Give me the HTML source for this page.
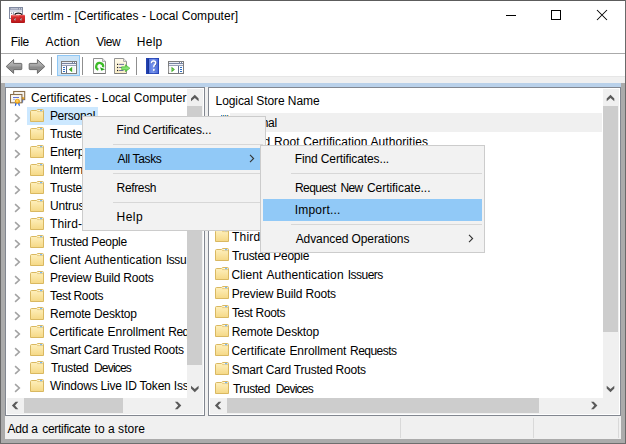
<!DOCTYPE html>
<html><head><meta charset="utf-8"><title>certlm</title>
<style>
html,body{margin:0;padding:0;}
body{width:626px;height:444px;position:relative;overflow:hidden;background:#fff;font-family:"Liberation Sans",sans-serif;font-size:12px;color:#000;}
div,span,svg{position:absolute;box-sizing:border-box;}
.t{white-space:nowrap;letter-spacing:-0.2px;}
.tree .t{left:50.5px;height:18px;line-height:18px;}
.tree .fo{left:30px;}
.tree .ch{left:14px;}
.list .t{left:232.5px;height:19px;line-height:19px;}
.list .fo{left:215px;}
.menu{background:#f2f2f2;border:1px solid #ccc;}
.menu .t{height:22px;line-height:22px;}
.menu .sep{height:1px;background:#d7d7d7;}
.menu .hl{background:#91c9f7;height:22px;}
.sb{background:#f0f0f0;}
.th{background:#cdcdcd;}
</style></head><body>

<div style="left:0;top:0;width:626px;height:444px;background:#ababab;"></div>
<div style="left:1px;top:1px;width:624px;height:82px;background:#fff;"></div>
<div style="left:1px;top:53px;width:624px;height:1px;background:#aaa;"></div>
<div style="left:1px;top:76px;width:624px;height:7px;background:#f0f0f0;"></div>
<div style="left:1px;top:76px;width:624px;height:1px;background:#e6e6e6;"></div>
<div style="left:0;top:0;width:626px;height:1px;background:#5c5c5c;"></div>
<div style="left:0;top:0;width:1px;height:444px;background:linear-gradient(#5c5c5c 0,#5c5c5c 80px,#686868 120px,#686868 100%);"></div>
<div style="left:625px;top:0;width:1px;height:444px;background:#6a6a6a;"></div>
<div style="left:0;top:443px;width:626px;height:1px;background:#6e6e6e;"></div>
<svg style="left:9px;top:7px" width="17" height="17" viewBox="0 0 17 17">
<defs><linearGradient id="tb" x1="0" y1="0" x2="0" y2="1"><stop offset="0" stop-color="#ee6a68"/><stop offset="0.22" stop-color="#d93030"/><stop offset="0.8" stop-color="#c41c1e"/><stop offset="1" stop-color="#a41416"/></linearGradient></defs>
<rect x="0.5" y="0.5" width="13" height="11" fill="#fff" stroke="#818aa0"/>
<rect x="1" y="1" width="12" height="1.9" fill="#8a93ab"/>
<rect x="1.6" y="1.5" width="7.4" height="0.7" fill="#eef0f6"/>
<rect x="10.1" y="1.4" width="0.9" height="0.9" fill="#fff"/><rect x="12" y="1.4" width="0.9" height="0.9" fill="#fff"/>
<rect x="1" y="3.5" width="12" height="1" fill="#aab1c6"/>
<rect x="4.2" y="5" width="0.9" height="6" fill="#8a93ab"/>
<rect x="2" y="5.8" width="1.2" height="0.9" fill="#444c66"/>
<path d="M5.9 8Q6.2 6.1 9.3 6.1Q12.4 6.1 12.7 8" fill="none" stroke="#161616" stroke-width="1.1"/>
<rect x="2" y="7.7" width="14" height="8.3" rx="0.9" fill="url(#tb)"/>
<rect x="3" y="8.5" width="7" height="0.7" fill="#f6a09c" opacity="0.8"/>
<rect x="5.1" y="11" width="1.6" height="2.4" fill="#cfe4e8" stroke="#8c1a1c" stroke-width="0.4"/>
<rect x="11.1" y="11" width="1.6" height="2.4" fill="#cfe4e8" stroke="#8c1a1c" stroke-width="0.4"/>
</svg>
<span class="t" style="left:30.75px;top:1px;height:30px;line-height:30px;letter-spacing:0.050px">certlm - [Certificates - Local Computer]</span>
<div style="left:506px;top:15px;width:10px;height:1px;background:#000;"></div>
<div style="left:551px;top:10px;width:10px;height:10px;border:1px solid #000;"></div>
<svg style="left:596px;top:9px" width="12" height="12" viewBox="0 0 12 12"><path d="M1 1L11 11M11 1L1 11" stroke="#000" stroke-width="1.05" fill="none"/></svg>
<span class="t" style="left:10.80px;top:32px;height:21px;line-height:21px;letter-spacing:-0.300px">File</span>
<span class="t" style="left:45.60px;top:32px;height:21px;line-height:21px;letter-spacing:0.140px">Action</span>
<span class="t" style="left:96.20px;top:32px;height:21px;line-height:21px;letter-spacing:-0.400px">View</span>
<span class="t" style="left:136.80px;top:32px;height:21px;line-height:21px;letter-spacing:0.267px">Help</span>
<svg style="left:5px;top:58px" width="18" height="17" viewBox="0 0 18 17"><defs><linearGradient id="ag" x1="0" y1="0" x2="0" y2="1"><stop offset="0" stop-color="#c2c2c2"/><stop offset="0.45" stop-color="#a4a4a4"/><stop offset="0.55" stop-color="#8c8c8c"/><stop offset="1" stop-color="#909090"/></linearGradient></defs><path d="M1.2 8.5L8.6 1.6V5.4H16.2Q16.8 5.4 16.8 6V11Q16.8 11.6 16.2 11.6H8.6V15.4Z" fill="url(#ag)" stroke="#6c6c6c" stroke-width="1"/></svg>
<svg style="left:28px;top:58px" width="18" height="17" viewBox="0 0 18 17"><path d="M16.8 8.5L9.4 1.6V5.4H1.8Q1.2 5.4 1.2 6V11Q1.2 11.6 1.8 11.6H9.4V15.4Z" fill="url(#ag)" stroke="#6c6c6c" stroke-width="1"/></svg>
<div style="left:51px;top:57px;width:1px;height:18px;background:#8f8f8f;"></div>
<div style="left:82px;top:57px;width:1px;height:18px;background:#8f8f8f;"></div>
<div style="left:136px;top:57px;width:1px;height:18px;background:#8f8f8f;"></div>
<div style="left:57px;top:55px;width:23px;height:21px;background:#cce4f7;border:1px solid #8fc7f5;"></div>
<svg style="left:61px;top:61px" width="16" height="13" viewBox="0 0 16 13" shape-rendering="crispEdges">
<rect x="0" y="0" width="16" height="13" fill="#7c7c7c"/>
<rect x="1" y="1" width="14" height="11" fill="#fff"/>
<rect x="1" y="1" width="14" height="2" fill="#77839f"/>
<rect x="1" y="1" width="10" height="1" fill="#e9ecf3"/>
<rect x="12" y="1" width="1" height="1" fill="#fff"/><rect x="14" y="1" width="1" height="1" fill="#fff"/>
<rect x="1" y="3" width="14" height="1" fill="#eef0f6"/>
<rect x="1" y="4" width="14" height="1" fill="#98a1b8"/>
<g>
<rect x="5" y="5" width="1" height="7" fill="#5e6c8c"/>
<rect x="2" y="6" width="2" height="1" fill="#2f6fc4"/><rect x="2" y="8" width="2" height="1" fill="#2f6fc4"/><rect x="2" y="10" width="2" height="1" fill="#2f6fc4"/>
<g transform="translate(0,0)"><rect x="12.3" y="5.6" width="1.6" height="5.8" fill="#f1f1f1" shape-rendering="auto"/>
<path d="M11.2 5.8V11.2L7.8 8.5Z" fill="#3aaa22" shape-rendering="auto"/></g>
</g></svg>
<svg style="left:93px;top:58px" width="14" height="16" viewBox="0 0 14 16">
<path d="M0.5 0.5H9.6L12.5 3.4V15.5H0.5Z" fill="#fcfcfc" stroke="#909090"/>
<path d="M0.5 15.5H12.5" stroke="#787878" fill="none"/>
<path d="M9.6 0.5V3.4H12.5" fill="#f0f0f0" stroke="#909090" stroke-width="0.8"/>
<path d="M5.3 11.7A3.5 3.5 0 1 1 10.1 9.2" fill="none" stroke="#3dbb28" stroke-width="2.2"/>
<path d="M7.0 9.2L12.0 11.2L8.4 12.8Z" fill="#22a316"/>
</svg>
<svg style="left:114px;top:58px" width="17" height="16" viewBox="0 0 17 16">
<defs><linearGradient id="pg" x1="0" y1="0" x2="0" y2="1"><stop offset="0" stop-color="#fefaea"/><stop offset="1" stop-color="#fbeec6"/></linearGradient>
<linearGradient id="eg" x1="0" y1="0" x2="0" y2="1"><stop offset="0" stop-color="#3fc02c"/><stop offset="0.5" stop-color="#8fe67c"/><stop offset="1" stop-color="#36b524"/></linearGradient></defs>
<path d="M0.5 0.5H9.6L12.5 3.4V15.5H0.5Z" fill="url(#pg)" stroke="#939393"/>
<path d="M0.5 15.5H12.5" stroke="#7c7c7c" fill="none"/>
<path d="M9.6 0.5V3.4H12.5" fill="#f4f4f4" stroke="#939393" stroke-width="0.8"/>
<rect x="3" y="5.8" width="1.2" height="1.2" fill="#1c1c1c"/><rect x="5.1" y="5.9" width="4.9" height="0.9" fill="#5a5f9a"/>
<rect x="3" y="8.9" width="1.2" height="1.2" fill="#1c1c1c"/><rect x="5.1" y="9" width="3" height="0.9" fill="#5a5f9a"/>
<rect x="3" y="11.9" width="1.2" height="1.2" fill="#1c1c1c"/><rect x="5.1" y="12" width="4.4" height="0.9" fill="#5a5f9a"/>
<path d="M7.6 8.8H11.4V6.7L16 10.2L11.4 13.7V11.7H7.6Z" fill="url(#eg)" stroke="#37b026" stroke-width="0.5"/>
</svg>
<svg style="left:146px;top:58px" width="13" height="16" viewBox="0 0 13 16">
<defs><linearGradient id="hg" x1="0" y1="0" x2="1" y2="0"><stop offset="0" stop-color="#5577e0"/><stop offset="0.5" stop-color="#7d99ef"/><stop offset="1" stop-color="#4465d6"/></linearGradient>
<linearGradient id="hs" x1="0" y1="0" x2="1" y2="0"><stop offset="0" stop-color="#2446b8"/><stop offset="1" stop-color="#16308e"/></linearGradient></defs>
<rect x="0" y="0" width="13" height="16" fill="#2240b0"/>
<rect x="3" y="0.8" width="9.2" height="14.4" fill="url(#hg)"/>
<rect x="0.4" y="0.6" width="2.6" height="14.8" fill="url(#hs)"/>
<path d="M6.1 5.6Q6 3.4 8.2 3.4Q10.3 3.4 10.3 5.2Q10.3 6.4 9.2 7.3Q8.4 8 8.4 9.8" fill="none" stroke="#24367a" stroke-width="1.5" opacity="0.55"/>
<rect x="7.6" y="11.7" width="1.7" height="1.7" fill="#24367a" opacity="0.55"/>
<path d="M5.5 5.2Q5.4 2.9 7.6 2.9Q9.7 2.9 9.7 4.7Q9.7 5.9 8.6 6.8Q7.8 7.5 7.8 9.3" fill="none" stroke="#fff" stroke-width="1.5"/>
<rect x="7" y="11.1" width="1.7" height="1.7" fill="#fff"/>
</svg>
<svg style="left:168px;top:61px" width="16" height="13" viewBox="0 0 16 13" shape-rendering="crispEdges">
<rect x="0" y="0" width="16" height="13" fill="#7c7c7c"/>
<rect x="1" y="1" width="14" height="11" fill="#fff"/>
<rect x="1" y="1" width="14" height="2" fill="#77839f"/>
<rect x="1" y="1" width="10" height="1" fill="#e9ecf3"/>
<rect x="12" y="1" width="1" height="1" fill="#fff"/><rect x="14" y="1" width="1" height="1" fill="#fff"/>
<rect x="1" y="3" width="14" height="1" fill="#eef0f6"/>
<rect x="1" y="4" width="14" height="1" fill="#98a1b8"/>
<g transform="translate(16,0) scale(-1,1)">
<rect x="5" y="5" width="1" height="7" fill="#5e6c8c"/>
<rect x="2" y="6" width="2" height="1" fill="#2f6fc4"/><rect x="2" y="8" width="2" height="1" fill="#2f6fc4"/><rect x="2" y="10" width="2" height="1" fill="#2f6fc4"/>
<g transform="translate(1.3,0)"><rect x="12.3" y="5.6" width="1.6" height="5.8" fill="#f1f1f1" shape-rendering="auto"/>
<path d="M11.2 5.8V11.2L7.8 8.5Z" fill="#3aaa22" shape-rendering="auto"/><path d="M10.4 7.4V9.6L9 8.5Z" fill="#8fdc7c" shape-rendering="auto"/></g>
</g></svg>
<div style="left:5px;top:83px;width:616px;height:4px;background:#b9d1ea;"></div>
<div style="left:5px;top:87px;width:616px;height:329px;background:#f0f0f0;"></div>
<div class="tree" style="left:5px;top:87px;width:200px;height:329px;background:#fff;border:1px solid #828790;overflow:hidden;">
<div style="left:-6px;top:-88px;width:626px;height:444px;">
<svg style="left:10px;top:90px" width="16" height="17" viewBox="0 0 16 17">
<defs><linearGradient id="cg" x1="0" y1="0" x2="1" y2="1"><stop offset="0" stop-color="#ffffff"/><stop offset="1" stop-color="#f1ece2"/></linearGradient></defs>
<rect x="3.7" y="1.5" width="11" height="8.1" fill="url(#cg)" stroke="#8a6f4c" stroke-width="1.1"/>
<circle cx="12.8" cy="8.4" r="1.3" fill="#f0a51a"/><path d="M12.2 9.6H13.3L13 13L12.3 12.4Z" fill="#1f5fe0"/>
<rect x="0.5" y="4.5" width="11.4" height="8.3" fill="url(#cg)" stroke="#8a6f4c" stroke-width="1.1"/>
<rect x="3" y="7" width="6" height="0.9" fill="#5566cf"/><rect x="3" y="8.9" width="2.2" height="0.8" fill="#8f9be0"/>
<path d="M5.4 12.6L4.8 16.2L6 15.6L6.9 13Z" fill="#1f5fe0"/><path d="M9.3 12.6L9.9 16.2L8.7 15.6L7.8 13Z" fill="#1f5fe0"/>
<circle cx="7.4" cy="11.2" r="2.5" fill="#eea41a"/><circle cx="7.3" cy="10.9" r="1.3" fill="#ffd35c"/>
</svg>
<span class="t" style="left:31.10px;top:89px;letter-spacing:0.000px">Certificates - Local Computer</span>
<div style="left:27px;top:107px;width:71px;height:18px;background:#cce8ff;"></div>
<svg class="ch" style="top:113px" width="7" height="10" viewBox="0 0 7 10"><path d="M1.1 1.2L5.3 5L1.1 8.8" fill="none" stroke="#a3a3a3" stroke-width="1.6"/></svg>
<svg class="fo" style="top:109px" width="14" height="13" viewBox="0 0 14 13"><defs><linearGradient id="fg" x1="0" y1="0" x2="0" y2="1"><stop offset="0" stop-color="#fff2c2"/><stop offset="1" stop-color="#f5d885"/></linearGradient></defs><path d="M0.5 12.5V2.6Q0.5 1.5 1.6 1.5H6.4L7.6 0.5H12.4Q13.5 0.5 13.5 1.6V12.5Z" fill="url(#fg)" stroke="#d9b861"/><path d="M7.2 2.6H13" stroke="#e6c776" fill="none"/><rect x="8.6" y="1.1" width="4" height="1.1" fill="#fffbe8"/><rect x="10" y="1.1" width="2.2" height="1.1" fill="#6fb2f2"/></svg>
<span class="t" style="left:49.90px;top:107px;letter-spacing:-0.271px">Personal</span>
<svg class="ch" style="top:131px" width="7" height="10" viewBox="0 0 7 10"><path d="M1.1 1.2L5.3 5L1.1 8.8" fill="none" stroke="#a3a3a3" stroke-width="1.6"/></svg>
<svg class="fo" style="top:127px" width="14" height="13" viewBox="0 0 14 13"><defs><linearGradient id="fg" x1="0" y1="0" x2="0" y2="1"><stop offset="0" stop-color="#fff2c2"/><stop offset="1" stop-color="#f5d885"/></linearGradient></defs><path d="M0.5 12.5V2.6Q0.5 1.5 1.6 1.5H6.4L7.6 0.5H12.4Q13.5 0.5 13.5 1.6V12.5Z" fill="url(#fg)" stroke="#d9b861"/><path d="M7.2 2.6H13" stroke="#e6c776" fill="none"/><rect x="8.6" y="1.1" width="4" height="1.1" fill="#fffbe8"/><rect x="10" y="1.1" width="2.2" height="1.1" fill="#6fb2f2"/></svg>
<span class="t" style="left:50.10px;top:125px;letter-spacing:-0.300px">Trusted Root Certification Authorities</span>
<svg class="ch" style="top:149px" width="7" height="10" viewBox="0 0 7 10"><path d="M1.1 1.2L5.3 5L1.1 8.8" fill="none" stroke="#a3a3a3" stroke-width="1.6"/></svg>
<svg class="fo" style="top:145px" width="14" height="13" viewBox="0 0 14 13"><defs><linearGradient id="fg" x1="0" y1="0" x2="0" y2="1"><stop offset="0" stop-color="#fff2c2"/><stop offset="1" stop-color="#f5d885"/></linearGradient></defs><path d="M0.5 12.5V2.6Q0.5 1.5 1.6 1.5H6.4L7.6 0.5H12.4Q13.5 0.5 13.5 1.6V12.5Z" fill="url(#fg)" stroke="#d9b861"/><path d="M7.2 2.6H13" stroke="#e6c776" fill="none"/><rect x="8.6" y="1.1" width="4" height="1.1" fill="#fffbe8"/><rect x="10" y="1.1" width="2.2" height="1.1" fill="#6fb2f2"/></svg>
<span class="t" style="left:49.90px;top:143px;letter-spacing:-0.150px">Enterprise Trust</span>
<svg class="ch" style="top:167px" width="7" height="10" viewBox="0 0 7 10"><path d="M1.1 1.2L5.3 5L1.1 8.8" fill="none" stroke="#a3a3a3" stroke-width="1.6"/></svg>
<svg class="fo" style="top:163px" width="14" height="13" viewBox="0 0 14 13"><defs><linearGradient id="fg" x1="0" y1="0" x2="0" y2="1"><stop offset="0" stop-color="#fff2c2"/><stop offset="1" stop-color="#f5d885"/></linearGradient></defs><path d="M0.5 12.5V2.6Q0.5 1.5 1.6 1.5H6.4L7.6 0.5H12.4Q13.5 0.5 13.5 1.6V12.5Z" fill="url(#fg)" stroke="#d9b861"/><path d="M7.2 2.6H13" stroke="#e6c776" fill="none"/><rect x="8.6" y="1.1" width="4" height="1.1" fill="#fffbe8"/><rect x="10" y="1.1" width="2.2" height="1.1" fill="#6fb2f2"/></svg>
<span class="t" style="left:49.90px;top:161px;letter-spacing:-0.150px">Intermediate Certification Authorities</span>
<svg class="ch" style="top:185px" width="7" height="10" viewBox="0 0 7 10"><path d="M1.1 1.2L5.3 5L1.1 8.8" fill="none" stroke="#a3a3a3" stroke-width="1.6"/></svg>
<svg class="fo" style="top:181px" width="14" height="13" viewBox="0 0 14 13"><defs><linearGradient id="fg" x1="0" y1="0" x2="0" y2="1"><stop offset="0" stop-color="#fff2c2"/><stop offset="1" stop-color="#f5d885"/></linearGradient></defs><path d="M0.5 12.5V2.6Q0.5 1.5 1.6 1.5H6.4L7.6 0.5H12.4Q13.5 0.5 13.5 1.6V12.5Z" fill="url(#fg)" stroke="#d9b861"/><path d="M7.2 2.6H13" stroke="#e6c776" fill="none"/><rect x="8.6" y="1.1" width="4" height="1.1" fill="#fffbe8"/><rect x="10" y="1.1" width="2.2" height="1.1" fill="#6fb2f2"/></svg>
<span class="t" style="left:50.10px;top:179px;letter-spacing:-0.300px">Trusted Publishers</span>
<svg class="ch" style="top:203px" width="7" height="10" viewBox="0 0 7 10"><path d="M1.1 1.2L5.3 5L1.1 8.8" fill="none" stroke="#a3a3a3" stroke-width="1.6"/></svg>
<svg class="fo" style="top:199px" width="14" height="13" viewBox="0 0 14 13"><defs><linearGradient id="fg" x1="0" y1="0" x2="0" y2="1"><stop offset="0" stop-color="#fff2c2"/><stop offset="1" stop-color="#f5d885"/></linearGradient></defs><path d="M0.5 12.5V2.6Q0.5 1.5 1.6 1.5H6.4L7.6 0.5H12.4Q13.5 0.5 13.5 1.6V12.5Z" fill="url(#fg)" stroke="#d9b861"/><path d="M7.2 2.6H13" stroke="#e6c776" fill="none"/><rect x="8.6" y="1.1" width="4" height="1.1" fill="#fffbe8"/><rect x="10" y="1.1" width="2.2" height="1.1" fill="#6fb2f2"/></svg>
<span class="t" style="left:49.90px;top:197px;letter-spacing:-0.150px">Untrusted Certificates</span>
<svg class="ch" style="top:221px" width="7" height="10" viewBox="0 0 7 10"><path d="M1.1 1.2L5.3 5L1.1 8.8" fill="none" stroke="#a3a3a3" stroke-width="1.6"/></svg>
<svg class="fo" style="top:217px" width="14" height="13" viewBox="0 0 14 13"><defs><linearGradient id="fg" x1="0" y1="0" x2="0" y2="1"><stop offset="0" stop-color="#fff2c2"/><stop offset="1" stop-color="#f5d885"/></linearGradient></defs><path d="M0.5 12.5V2.6Q0.5 1.5 1.6 1.5H6.4L7.6 0.5H12.4Q13.5 0.5 13.5 1.6V12.5Z" fill="url(#fg)" stroke="#d9b861"/><path d="M7.2 2.6H13" stroke="#e6c776" fill="none"/><rect x="8.6" y="1.1" width="4" height="1.1" fill="#fffbe8"/><rect x="10" y="1.1" width="2.2" height="1.1" fill="#6fb2f2"/></svg>
<span class="t" style="left:50.10px;top:215px;letter-spacing:0.120px">Third-Party Root Certification Authorities</span>
<svg class="ch" style="top:239px" width="7" height="10" viewBox="0 0 7 10"><path d="M1.1 1.2L5.3 5L1.1 8.8" fill="none" stroke="#a3a3a3" stroke-width="1.6"/></svg>
<svg class="fo" style="top:235px" width="14" height="13" viewBox="0 0 14 13"><defs><linearGradient id="fg" x1="0" y1="0" x2="0" y2="1"><stop offset="0" stop-color="#fff2c2"/><stop offset="1" stop-color="#f5d885"/></linearGradient></defs><path d="M0.5 12.5V2.6Q0.5 1.5 1.6 1.5H6.4L7.6 0.5H12.4Q13.5 0.5 13.5 1.6V12.5Z" fill="url(#fg)" stroke="#d9b861"/><path d="M7.2 2.6H13" stroke="#e6c776" fill="none"/><rect x="8.6" y="1.1" width="4" height="1.1" fill="#fffbe8"/><rect x="10" y="1.1" width="2.2" height="1.1" fill="#6fb2f2"/></svg>
<span class="t" style="left:50.10px;top:233px;letter-spacing:-0.300px">Trusted People</span>
<svg class="ch" style="top:257px" width="7" height="10" viewBox="0 0 7 10"><path d="M1.1 1.2L5.3 5L1.1 8.8" fill="none" stroke="#a3a3a3" stroke-width="1.6"/></svg>
<svg class="fo" style="top:253px" width="14" height="13" viewBox="0 0 14 13"><defs><linearGradient id="fg" x1="0" y1="0" x2="0" y2="1"><stop offset="0" stop-color="#fff2c2"/><stop offset="1" stop-color="#f5d885"/></linearGradient></defs><path d="M0.5 12.5V2.6Q0.5 1.5 1.6 1.5H6.4L7.6 0.5H12.4Q13.5 0.5 13.5 1.6V12.5Z" fill="url(#fg)" stroke="#d9b861"/><path d="M7.2 2.6H13" stroke="#e6c776" fill="none"/><rect x="8.6" y="1.1" width="4" height="1.1" fill="#fffbe8"/><rect x="10" y="1.1" width="2.2" height="1.1" fill="#6fb2f2"/></svg>
<span class="t" style="left:49.60px;top:251px;letter-spacing:0.060px">Client</span><span class="t" style="left:84.60px;top:251px;letter-spacing:0.085px">Authentication</span><span class="t" style="left:165.90px;top:251px;letter-spacing:-0.433px">Issu</span>
<svg class="ch" style="top:275px" width="7" height="10" viewBox="0 0 7 10"><path d="M1.1 1.2L5.3 5L1.1 8.8" fill="none" stroke="#a3a3a3" stroke-width="1.6"/></svg>
<svg class="fo" style="top:271px" width="14" height="13" viewBox="0 0 14 13"><defs><linearGradient id="fg" x1="0" y1="0" x2="0" y2="1"><stop offset="0" stop-color="#fff2c2"/><stop offset="1" stop-color="#f5d885"/></linearGradient></defs><path d="M0.5 12.5V2.6Q0.5 1.5 1.6 1.5H6.4L7.6 0.5H12.4Q13.5 0.5 13.5 1.6V12.5Z" fill="url(#fg)" stroke="#d9b861"/><path d="M7.2 2.6H13" stroke="#e6c776" fill="none"/><rect x="8.6" y="1.1" width="4" height="1.1" fill="#fffbe8"/><rect x="10" y="1.1" width="2.2" height="1.1" fill="#6fb2f2"/></svg>
<span class="t" style="left:49.90px;top:269px;letter-spacing:-0.189px">Preview Build Roots</span>
<svg class="ch" style="top:293px" width="7" height="10" viewBox="0 0 7 10"><path d="M1.1 1.2L5.3 5L1.1 8.8" fill="none" stroke="#a3a3a3" stroke-width="1.6"/></svg>
<svg class="fo" style="top:289px" width="14" height="13" viewBox="0 0 14 13"><defs><linearGradient id="fg" x1="0" y1="0" x2="0" y2="1"><stop offset="0" stop-color="#fff2c2"/><stop offset="1" stop-color="#f5d885"/></linearGradient></defs><path d="M0.5 12.5V2.6Q0.5 1.5 1.6 1.5H6.4L7.6 0.5H12.4Q13.5 0.5 13.5 1.6V12.5Z" fill="url(#fg)" stroke="#d9b861"/><path d="M7.2 2.6H13" stroke="#e6c776" fill="none"/><rect x="8.6" y="1.1" width="4" height="1.1" fill="#fffbe8"/><rect x="10" y="1.1" width="2.2" height="1.1" fill="#6fb2f2"/></svg>
<span class="t" style="left:50.10px;top:287px;letter-spacing:-0.378px">Test Roots</span>
<svg class="ch" style="top:311px" width="7" height="10" viewBox="0 0 7 10"><path d="M1.1 1.2L5.3 5L1.1 8.8" fill="none" stroke="#a3a3a3" stroke-width="1.6"/></svg>
<svg class="fo" style="top:307px" width="14" height="13" viewBox="0 0 14 13"><defs><linearGradient id="fg" x1="0" y1="0" x2="0" y2="1"><stop offset="0" stop-color="#fff2c2"/><stop offset="1" stop-color="#f5d885"/></linearGradient></defs><path d="M0.5 12.5V2.6Q0.5 1.5 1.6 1.5H6.4L7.6 0.5H12.4Q13.5 0.5 13.5 1.6V12.5Z" fill="url(#fg)" stroke="#d9b861"/><path d="M7.2 2.6H13" stroke="#e6c776" fill="none"/><rect x="8.6" y="1.1" width="4" height="1.1" fill="#fffbe8"/><rect x="10" y="1.1" width="2.2" height="1.1" fill="#6fb2f2"/></svg>
<span class="t" style="left:49.90px;top:305px;letter-spacing:-0.177px">Remote Desktop</span>
<svg class="ch" style="top:329px" width="7" height="10" viewBox="0 0 7 10"><path d="M1.1 1.2L5.3 5L1.1 8.8" fill="none" stroke="#a3a3a3" stroke-width="1.6"/></svg>
<svg class="fo" style="top:325px" width="14" height="13" viewBox="0 0 14 13"><defs><linearGradient id="fg" x1="0" y1="0" x2="0" y2="1"><stop offset="0" stop-color="#fff2c2"/><stop offset="1" stop-color="#f5d885"/></linearGradient></defs><path d="M0.5 12.5V2.6Q0.5 1.5 1.6 1.5H6.4L7.6 0.5H12.4Q13.5 0.5 13.5 1.6V12.5Z" fill="url(#fg)" stroke="#d9b861"/><path d="M7.2 2.6H13" stroke="#e6c776" fill="none"/><rect x="8.6" y="1.1" width="4" height="1.1" fill="#fffbe8"/><rect x="10" y="1.1" width="2.2" height="1.1" fill="#6fb2f2"/></svg>
<span class="t" style="left:49.60px;top:323px;letter-spacing:0.020px">Certificate</span><span class="t" style="left:107.60px;top:323px;letter-spacing:-0.044px">Enrollment</span><span class="t" style="left:168.30px;top:323px;letter-spacing:-0.543px">Requests</span>
<svg class="ch" style="top:347px" width="7" height="10" viewBox="0 0 7 10"><path d="M1.1 1.2L5.3 5L1.1 8.8" fill="none" stroke="#a3a3a3" stroke-width="1.6"/></svg>
<svg class="fo" style="top:343px" width="14" height="13" viewBox="0 0 14 13"><defs><linearGradient id="fg" x1="0" y1="0" x2="0" y2="1"><stop offset="0" stop-color="#fff2c2"/><stop offset="1" stop-color="#f5d885"/></linearGradient></defs><path d="M0.5 12.5V2.6Q0.5 1.5 1.6 1.5H6.4L7.6 0.5H12.4Q13.5 0.5 13.5 1.6V12.5Z" fill="url(#fg)" stroke="#d9b861"/><path d="M7.2 2.6H13" stroke="#e6c776" fill="none"/><rect x="8.6" y="1.1" width="4" height="1.1" fill="#fffbe8"/><rect x="10" y="1.1" width="2.2" height="1.1" fill="#6fb2f2"/></svg>
<span class="t" style="left:49.90px;top:341px;letter-spacing:-0.226px">Smart Card Trusted Roots</span>
<svg class="ch" style="top:365px" width="7" height="10" viewBox="0 0 7 10"><path d="M1.1 1.2L5.3 5L1.1 8.8" fill="none" stroke="#a3a3a3" stroke-width="1.6"/></svg>
<svg class="fo" style="top:361px" width="14" height="13" viewBox="0 0 14 13"><defs><linearGradient id="fg" x1="0" y1="0" x2="0" y2="1"><stop offset="0" stop-color="#fff2c2"/><stop offset="1" stop-color="#f5d885"/></linearGradient></defs><path d="M0.5 12.5V2.6Q0.5 1.5 1.6 1.5H6.4L7.6 0.5H12.4Q13.5 0.5 13.5 1.6V12.5Z" fill="url(#fg)" stroke="#d9b861"/><path d="M7.2 2.6H13" stroke="#e6c776" fill="none"/><rect x="8.6" y="1.1" width="4" height="1.1" fill="#fffbe8"/><rect x="10" y="1.1" width="2.2" height="1.1" fill="#6fb2f2"/></svg>
<span class="t" style="left:51.10px;top:359px;letter-spacing:-0.433px">Trusted</span><span class="t" style="left:93.90px;top:359px;letter-spacing:-0.783px">Devices</span>
<svg class="ch" style="top:383px" width="7" height="10" viewBox="0 0 7 10"><path d="M1.1 1.2L5.3 5L1.1 8.8" fill="none" stroke="#a3a3a3" stroke-width="1.6"/></svg>
<svg class="fo" style="top:379px" width="14" height="13" viewBox="0 0 14 13"><defs><linearGradient id="fg" x1="0" y1="0" x2="0" y2="1"><stop offset="0" stop-color="#fff2c2"/><stop offset="1" stop-color="#f5d885"/></linearGradient></defs><path d="M0.5 12.5V2.6Q0.5 1.5 1.6 1.5H6.4L7.6 0.5H12.4Q13.5 0.5 13.5 1.6V12.5Z" fill="url(#fg)" stroke="#d9b861"/><path d="M7.2 2.6H13" stroke="#e6c776" fill="none"/><rect x="8.6" y="1.1" width="4" height="1.1" fill="#fffbe8"/><rect x="10" y="1.1" width="2.2" height="1.1" fill="#6fb2f2"/></svg>
<span class="t" style="left:50.10px;top:377px;letter-spacing:-0.190px">Windows Live ID Token Issuer</span>
<div style="left:203px;top:88px;width:1px;height:327px;background:#fff;"></div>
<div class="sb" style="left:187px;top:89px;width:16px;height:309px;"></div>
<div class="th" style="left:187px;top:106px;width:15px;height:259px;"></div>
<svg style="left:0;top:0" width="626" height="444"><polygon points="194.8,94.8 198.6,98.5 198.6,101.2 194.8,97.9 191.0,101.2 191.0,98.5" fill="#5a5a5a"/></svg>
<svg style="left:0;top:0" width="626" height="444"><polygon points="194.8,392.2 198.6,388.5 198.6,385.8 194.8,389.1 191.0,385.8 191.0,388.5" fill="#5a5a5a"/></svg>
<div class="sb" style="left:7px;top:398px;width:196px;height:16px;"></div>
<div class="th" style="left:24px;top:398px;width:98.5px;height:15px;"></div>
<svg style="left:0;top:0" width="626" height="444"><polygon points="11.9,405.5 15.6,409.3 18.3,409.3 15.0,405.5 18.3,401.7 15.6,401.7" fill="#5a5a5a"/></svg>
<svg style="left:0;top:0" width="626" height="444"><polygon points="181.3,405.5 177.6,409.3 174.9,409.3 178.2,405.5 174.9,401.7 177.6,401.7" fill="#5a5a5a"/></svg>
</div></div>
<div class="list" style="left:208px;top:87px;width:413px;height:329px;background:#fff;border:1px solid #828790;overflow:hidden;">
<div style="left:-209px;top:-88px;width:626px;height:444px;">
<span class="t" style="left:215.60px;top:92px;height:19px;line-height:19px;letter-spacing:-0.082px">Logical Store Name</span>
<div style="left:230px;top:113px;width:372px;height:19px;background:#f0f0f0;"></div>
<div style="left:221px;top:115px;width:8px;height:1px;background:repeating-linear-gradient(90deg,#2a84e2 0,#2a84e2 1px,#f5d788 1px,#f5d788 2px);"></div>
<span class="t" style="left:231.70px;top:114px;letter-spacing:-0.270px">Personal</span>
<svg class="fo" style="top:134px" width="14" height="13" viewBox="0 0 14 13"><defs><linearGradient id="fg" x1="0" y1="0" x2="0" y2="1"><stop offset="0" stop-color="#fff2c2"/><stop offset="1" stop-color="#f5d885"/></linearGradient></defs><path d="M0.5 12.5V2.6Q0.5 1.5 1.6 1.5H6.4L7.6 0.5H12.4Q13.5 0.5 13.5 1.6V12.5Z" fill="url(#fg)" stroke="#d9b861"/><path d="M7.2 2.6H13" stroke="#e6c776" fill="none"/><rect x="8.6" y="1.1" width="4" height="1.1" fill="#fffbe8"/><rect x="10" y="1.1" width="2.2" height="1.1" fill="#6fb2f2"/></svg>
<span class="t" style="left:231.90px;top:133px;letter-spacing:-0.333px">Trusted</span>
<span class="t" style="left:274.10px;top:133px;letter-spacing:0.083px">Root Certification Authorities</span>
<svg class="fo" style="top:153px" width="14" height="13" viewBox="0 0 14 13"><defs><linearGradient id="fg" x1="0" y1="0" x2="0" y2="1"><stop offset="0" stop-color="#fff2c2"/><stop offset="1" stop-color="#f5d885"/></linearGradient></defs><path d="M0.5 12.5V2.6Q0.5 1.5 1.6 1.5H6.4L7.6 0.5H12.4Q13.5 0.5 13.5 1.6V12.5Z" fill="url(#fg)" stroke="#d9b861"/><path d="M7.2 2.6H13" stroke="#e6c776" fill="none"/><rect x="8.6" y="1.1" width="4" height="1.1" fill="#fffbe8"/><rect x="10" y="1.1" width="2.2" height="1.1" fill="#6fb2f2"/></svg>
<span class="t" style="left:231.70px;top:152px;letter-spacing:-0.150px">Enterprise Trust</span>
<svg class="fo" style="top:172px" width="14" height="13" viewBox="0 0 14 13"><defs><linearGradient id="fg" x1="0" y1="0" x2="0" y2="1"><stop offset="0" stop-color="#fff2c2"/><stop offset="1" stop-color="#f5d885"/></linearGradient></defs><path d="M0.5 12.5V2.6Q0.5 1.5 1.6 1.5H6.4L7.6 0.5H12.4Q13.5 0.5 13.5 1.6V12.5Z" fill="url(#fg)" stroke="#d9b861"/><path d="M7.2 2.6H13" stroke="#e6c776" fill="none"/><rect x="8.6" y="1.1" width="4" height="1.1" fill="#fffbe8"/><rect x="10" y="1.1" width="2.2" height="1.1" fill="#6fb2f2"/></svg>
<span class="t" style="left:231.70px;top:171px;letter-spacing:-0.150px">Intermediate Certification Authorities</span>
<svg class="fo" style="top:191px" width="14" height="13" viewBox="0 0 14 13"><defs><linearGradient id="fg" x1="0" y1="0" x2="0" y2="1"><stop offset="0" stop-color="#fff2c2"/><stop offset="1" stop-color="#f5d885"/></linearGradient></defs><path d="M0.5 12.5V2.6Q0.5 1.5 1.6 1.5H6.4L7.6 0.5H12.4Q13.5 0.5 13.5 1.6V12.5Z" fill="url(#fg)" stroke="#d9b861"/><path d="M7.2 2.6H13" stroke="#e6c776" fill="none"/><rect x="8.6" y="1.1" width="4" height="1.1" fill="#fffbe8"/><rect x="10" y="1.1" width="2.2" height="1.1" fill="#6fb2f2"/></svg>
<span class="t" style="left:231.90px;top:190px;letter-spacing:-0.300px">Trusted Publishers</span>
<svg class="fo" style="top:210px" width="14" height="13" viewBox="0 0 14 13"><defs><linearGradient id="fg" x1="0" y1="0" x2="0" y2="1"><stop offset="0" stop-color="#fff2c2"/><stop offset="1" stop-color="#f5d885"/></linearGradient></defs><path d="M0.5 12.5V2.6Q0.5 1.5 1.6 1.5H6.4L7.6 0.5H12.4Q13.5 0.5 13.5 1.6V12.5Z" fill="url(#fg)" stroke="#d9b861"/><path d="M7.2 2.6H13" stroke="#e6c776" fill="none"/><rect x="8.6" y="1.1" width="4" height="1.1" fill="#fffbe8"/><rect x="10" y="1.1" width="2.2" height="1.1" fill="#6fb2f2"/></svg>
<span class="t" style="left:231.70px;top:209px;letter-spacing:-0.150px">Untrusted Certificates</span>
<svg class="fo" style="top:229px" width="14" height="13" viewBox="0 0 14 13"><defs><linearGradient id="fg" x1="0" y1="0" x2="0" y2="1"><stop offset="0" stop-color="#fff2c2"/><stop offset="1" stop-color="#f5d885"/></linearGradient></defs><path d="M0.5 12.5V2.6Q0.5 1.5 1.6 1.5H6.4L7.6 0.5H12.4Q13.5 0.5 13.5 1.6V12.5Z" fill="url(#fg)" stroke="#d9b861"/><path d="M7.2 2.6H13" stroke="#e6c776" fill="none"/><rect x="8.6" y="1.1" width="4" height="1.1" fill="#fffbe8"/><rect x="10" y="1.1" width="2.2" height="1.1" fill="#6fb2f2"/></svg>
<span class="t" style="left:231.90px;top:228px;letter-spacing:0.250px">Third-Party Root Certification Authorities</span>
<svg class="fo" style="top:248px" width="14" height="13" viewBox="0 0 14 13"><defs><linearGradient id="fg" x1="0" y1="0" x2="0" y2="1"><stop offset="0" stop-color="#fff2c2"/><stop offset="1" stop-color="#f5d885"/></linearGradient></defs><path d="M0.5 12.5V2.6Q0.5 1.5 1.6 1.5H6.4L7.6 0.5H12.4Q13.5 0.5 13.5 1.6V12.5Z" fill="url(#fg)" stroke="#d9b861"/><path d="M7.2 2.6H13" stroke="#e6c776" fill="none"/><rect x="8.6" y="1.1" width="4" height="1.1" fill="#fffbe8"/><rect x="10" y="1.1" width="2.2" height="1.1" fill="#6fb2f2"/></svg>
<span class="t" style="left:231.90px;top:247px;letter-spacing:-0.269px">Trusted People</span>
<svg class="fo" style="top:267px" width="14" height="13" viewBox="0 0 14 13"><defs><linearGradient id="fg" x1="0" y1="0" x2="0" y2="1"><stop offset="0" stop-color="#fff2c2"/><stop offset="1" stop-color="#f5d885"/></linearGradient></defs><path d="M0.5 12.5V2.6Q0.5 1.5 1.6 1.5H6.4L7.6 0.5H12.4Q13.5 0.5 13.5 1.6V12.5Z" fill="url(#fg)" stroke="#d9b861"/><path d="M7.2 2.6H13" stroke="#e6c776" fill="none"/><rect x="8.6" y="1.1" width="4" height="1.1" fill="#fffbe8"/><rect x="10" y="1.1" width="2.2" height="1.1" fill="#6fb2f2"/></svg>
<span class="t" style="left:231.40px;top:266px;letter-spacing:0.060px">Client</span><span class="t" style="left:266.40px;top:266px;letter-spacing:0.085px">Authentication</span><span class="t" style="left:347.70px;top:266px;letter-spacing:-0.500px">Issuers</span>
<svg class="fo" style="top:286px" width="14" height="13" viewBox="0 0 14 13"><defs><linearGradient id="fg" x1="0" y1="0" x2="0" y2="1"><stop offset="0" stop-color="#fff2c2"/><stop offset="1" stop-color="#f5d885"/></linearGradient></defs><path d="M0.5 12.5V2.6Q0.5 1.5 1.6 1.5H6.4L7.6 0.5H12.4Q13.5 0.5 13.5 1.6V12.5Z" fill="url(#fg)" stroke="#d9b861"/><path d="M7.2 2.6H13" stroke="#e6c776" fill="none"/><rect x="8.6" y="1.1" width="4" height="1.1" fill="#fffbe8"/><rect x="10" y="1.1" width="2.2" height="1.1" fill="#6fb2f2"/></svg>
<span class="t" style="left:231.70px;top:285px;letter-spacing:-0.167px">Preview Build Roots</span>
<svg class="fo" style="top:305px" width="14" height="13" viewBox="0 0 14 13"><defs><linearGradient id="fg" x1="0" y1="0" x2="0" y2="1"><stop offset="0" stop-color="#fff2c2"/><stop offset="1" stop-color="#f5d885"/></linearGradient></defs><path d="M0.5 12.5V2.6Q0.5 1.5 1.6 1.5H6.4L7.6 0.5H12.4Q13.5 0.5 13.5 1.6V12.5Z" fill="url(#fg)" stroke="#d9b861"/><path d="M7.2 2.6H13" stroke="#e6c776" fill="none"/><rect x="8.6" y="1.1" width="4" height="1.1" fill="#fffbe8"/><rect x="10" y="1.1" width="2.2" height="1.1" fill="#6fb2f2"/></svg>
<span class="t" style="left:231.90px;top:304px;letter-spacing:-0.333px">Test Roots</span>
<svg class="fo" style="top:324px" width="14" height="13" viewBox="0 0 14 13"><defs><linearGradient id="fg" x1="0" y1="0" x2="0" y2="1"><stop offset="0" stop-color="#fff2c2"/><stop offset="1" stop-color="#f5d885"/></linearGradient></defs><path d="M0.5 12.5V2.6Q0.5 1.5 1.6 1.5H6.4L7.6 0.5H12.4Q13.5 0.5 13.5 1.6V12.5Z" fill="url(#fg)" stroke="#d9b861"/><path d="M7.2 2.6H13" stroke="#e6c776" fill="none"/><rect x="8.6" y="1.1" width="4" height="1.1" fill="#fffbe8"/><rect x="10" y="1.1" width="2.2" height="1.1" fill="#6fb2f2"/></svg>
<span class="t" style="left:231.70px;top:323px;letter-spacing:-0.138px">Remote Desktop</span>
<svg class="fo" style="top:343px" width="14" height="13" viewBox="0 0 14 13"><defs><linearGradient id="fg" x1="0" y1="0" x2="0" y2="1"><stop offset="0" stop-color="#fff2c2"/><stop offset="1" stop-color="#f5d885"/></linearGradient></defs><path d="M0.5 12.5V2.6Q0.5 1.5 1.6 1.5H6.4L7.6 0.5H12.4Q13.5 0.5 13.5 1.6V12.5Z" fill="url(#fg)" stroke="#d9b861"/><path d="M7.2 2.6H13" stroke="#e6c776" fill="none"/><rect x="8.6" y="1.1" width="4" height="1.1" fill="#fffbe8"/><rect x="10" y="1.1" width="2.2" height="1.1" fill="#6fb2f2"/></svg>
<span class="t" style="left:231.40px;top:342px;letter-spacing:0.020px">Certificate</span><span class="t" style="left:289.40px;top:342px;letter-spacing:-0.044px">Enrollment</span><span class="t" style="left:350.10px;top:342px;letter-spacing:-0.543px">Requests</span>
<svg class="fo" style="top:362px" width="14" height="13" viewBox="0 0 14 13"><defs><linearGradient id="fg" x1="0" y1="0" x2="0" y2="1"><stop offset="0" stop-color="#fff2c2"/><stop offset="1" stop-color="#f5d885"/></linearGradient></defs><path d="M0.5 12.5V2.6Q0.5 1.5 1.6 1.5H6.4L7.6 0.5H12.4Q13.5 0.5 13.5 1.6V12.5Z" fill="url(#fg)" stroke="#d9b861"/><path d="M7.2 2.6H13" stroke="#e6c776" fill="none"/><rect x="8.6" y="1.1" width="4" height="1.1" fill="#fffbe8"/><rect x="10" y="1.1" width="2.2" height="1.1" fill="#6fb2f2"/></svg>
<span class="t" style="left:231.70px;top:361px;letter-spacing:-0.217px">Smart Card Trusted Roots</span>
<svg class="fo" style="top:381px" width="14" height="13" viewBox="0 0 14 13"><defs><linearGradient id="fg" x1="0" y1="0" x2="0" y2="1"><stop offset="0" stop-color="#fff2c2"/><stop offset="1" stop-color="#f5d885"/></linearGradient></defs><path d="M0.5 12.5V2.6Q0.5 1.5 1.6 1.5H6.4L7.6 0.5H12.4Q13.5 0.5 13.5 1.6V12.5Z" fill="url(#fg)" stroke="#d9b861"/><path d="M7.2 2.6H13" stroke="#e6c776" fill="none"/><rect x="8.6" y="1.1" width="4" height="1.1" fill="#fffbe8"/><rect x="10" y="1.1" width="2.2" height="1.1" fill="#6fb2f2"/></svg>
<span class="t" style="left:232.90px;top:380px;letter-spacing:-0.433px">Trusted</span><span class="t" style="left:275.70px;top:380px;letter-spacing:-0.783px">Devices</span>
<div class="sb" style="left:603px;top:89px;width:16px;height:309px;"></div>
<div class="th" style="left:603px;top:106px;width:15px;height:226px;"></div>
<svg style="left:0;top:0" width="626" height="444"><polygon points="610.5,94.8 614.3,98.5 614.3,101.2 610.5,97.9 606.7,101.2 606.7,98.5" fill="#5a5a5a"/></svg>
<svg style="left:0;top:0" width="626" height="444"><polygon points="610.5,392.2 614.3,388.5 614.3,385.8 610.5,389.1 606.7,385.8 606.7,388.5" fill="#5a5a5a"/></svg>
<div class="sb" style="left:210px;top:398px;width:409px;height:16px;"></div>
<div class="th" style="left:227px;top:398px;width:312px;height:15px;"></div>
<svg style="left:0;top:0" width="626" height="444"><polygon points="214.9,405.5 218.6,409.3 221.3,409.3 218.0,405.5 221.3,401.7 218.6,401.7" fill="#5a5a5a"/></svg>
<svg style="left:0;top:0" width="626" height="444"><polygon points="597.4,405.5 593.7,409.3 591.0,409.3 594.3,405.5 591.0,401.7 593.7,401.7" fill="#5a5a5a"/></svg>
</div></div>
<div style="left:5px;top:416px;width:616px;height:23px;background:#f0f0f0;"></div>
<span class="t" style="left:7.60px;top:419px;height:20px;line-height:20px;letter-spacing:-0.275px">Add a</span><span class="t" style="left:42.30px;top:419px;height:20px;line-height:20px;letter-spacing:-0.300px">certificate</span><span class="t" style="left:94.60px;top:419px;height:20px;line-height:20px;letter-spacing:0.033px">to a store</span>
<div style="left:400px;top:418px;width:1px;height:20px;background:#d9d9d9;"></div>
<div style="left:533px;top:418px;width:1px;height:20px;background:#d9d9d9;"></div>
<div style="left:618px;top:418px;width:1px;height:20px;background:#d9d9d9;"></div>
<div class="menu" style="left:82px;top:116px;width:184px;height:115px;">
<div style="left:-83px;top:-117px;width:626px;height:444px;">
<div class="hl" style="left:85px;top:148px;width:178px;"></div>
<div class="sep" style="left:113px;top:144px;width:150px;"></div>
<div class="sep" style="left:113px;top:173px;width:150px;"></div>
<div class="sep" style="left:113px;top:202px;width:150px;"></div>
<span class="t" style="left:116.60px;top:119px;letter-spacing:-0.084px">Find Certificates...</span>
<span class="t" style="left:117.60px;top:148px;letter-spacing:-0.363px">All Tasks</span>
<span class="t" style="left:116.60px;top:177px;letter-spacing:-0.350px">Refresh</span>
<span class="t" style="left:116.60px;top:206px;letter-spacing:0.467px">Help</span>
<svg style="left:249px;top:154px" width="6" height="9" viewBox="0 0 6 9"><path d="M1 0.9L4.6 4.5L1 8.1" fill="none" stroke="#333" stroke-width="1.1"/></svg>
</div></div>
<div class="menu" style="left:260px;top:145px;width:225px;height:108px;">
<div style="left:-261px;top:-146px;width:626px;height:444px;">
<div class="hl" style="left:263px;top:199px;width:219px;"></div>
<div class="sep" style="left:291px;top:173px;width:191px;"></div>
<div class="sep" style="left:291px;top:224px;width:191px;"></div>
<span class="t" style="left:294.70px;top:148px;letter-spacing:-0.116px">Find Certificates...</span>
<span class="t" style="left:295.00px;top:177px;letter-spacing:-0.550px">Request</span><span class="t" style="left:340.50px;top:177px;letter-spacing:-0.700px">New</span><span class="t" style="left:366.90px;top:177px;letter-spacing:-0.031px">Certificate...</span>
<span class="t" style="left:294.70px;top:199px;letter-spacing:0.212px">Import...</span>
<span class="t" style="left:295.70px;top:228px;letter-spacing:-0.094px">Advanced Operations</span>
<svg style="left:468px;top:234px" width="6" height="9" viewBox="0 0 6 9"><path d="M1 0.9L4.6 4.5L1 8.1" fill="none" stroke="#333" stroke-width="1.1"/></svg>
</div></div>
</body></html>
